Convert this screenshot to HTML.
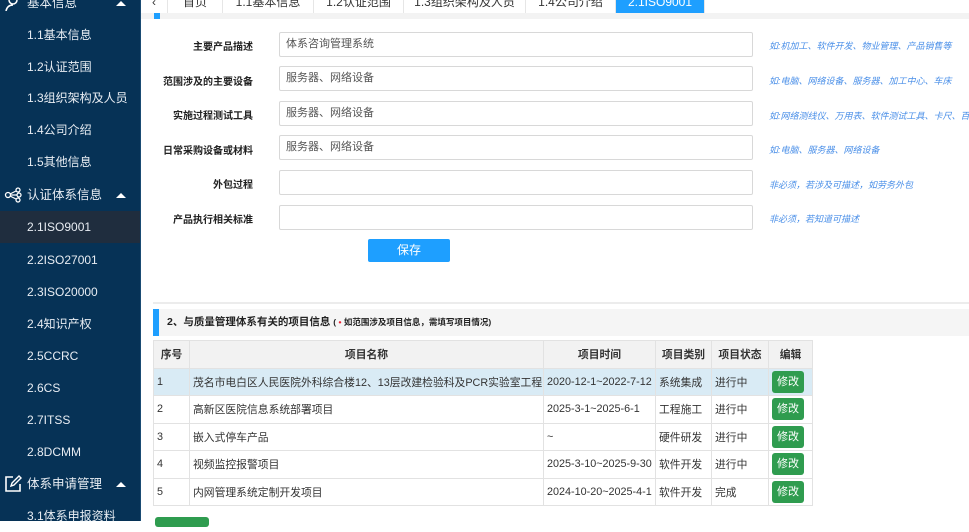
<!DOCTYPE html>
<html><head><meta charset="utf-8"><style>
*{margin:0;padding:0;box-sizing:border-box}
body{width:969px;height:521px;overflow:hidden;background:#fff;font-family:"Liberation Sans","Noto Sans CJK SC",sans-serif;font-size:12px;color:#333;position:relative}
.side{position:absolute;left:0;top:0;width:141px;height:521px;background:#063256;color:#e8edf3;border-right:1px solid #1a4b73}
.side div{position:absolute;left:0;width:140px;height:32px;line-height:32px;padding-left:27px;font-size:12px}
.side .g{padding-left:27px;font-size:12.5px}
.side .act{background:#1f2d3e}
.tri{position:absolute;right:14px;top:14px;width:0;height:0;border-left:5px solid transparent;border-right:5px solid transparent;border-bottom:5px solid #fff}
.ico{position:absolute;left:4px;top:8px}
.tabs{position:absolute;left:141px;top:0;width:828px;height:13px;background:#fff}
.tab{position:absolute;top:-8px;height:21px;line-height:21px;text-align:center;font-size:12px;color:#333;border-right:1px solid #e6e6e6}
.strip{position:absolute;left:141px;top:13px;width:828px;height:6px;background:#f3f3f3}
.lbl{position:absolute;width:120px;left:133px;text-align:right;font-weight:bold;font-size:10px;color:#222}
.inp{position:absolute;left:279px;width:474px;height:25px;border:1px solid #d8d8d8;border-radius:2px;line-height:23px;padding-left:6px;font-size:11px;color:#555}
.hint{position:absolute;left:769px;font-size:9px;color:#4a8fe8;font-style:italic;white-space:nowrap}
.save{position:absolute;left:368px;top:239px;width:82px;height:23px;background:#1e9fff;color:#fff;text-align:center;line-height:23px;border-radius:2px;font-size:12px}
table{position:absolute;left:153px;top:340px;border-collapse:collapse;font-size:10.8px;table-layout:fixed;width:659px}
td,th{border:1px solid #e2e2e2;padding:0 3px;height:27.5px;white-space:nowrap;overflow:hidden}
th{background:#f2f2f2;font-weight:bold;text-align:center;font-size:10.8px}
tr.hl td{background:#d9ebf5}
.btn{display:inline-block;width:32px;height:22px;background:#2f9c4f;color:#fff;border-radius:3px;text-align:center;line-height:22px;font-size:11px}
</style></head><body>
<div class="side">
<div style="top:-13px" class="g"><svg class="ico" width="18" height="16" viewBox="0 0 18 16"><circle cx="9" cy="5" r="4" fill="none" stroke="#fff" stroke-width="1.5"/><path d="M2 16c1-5 4-6 7-6" fill="none" stroke="#fff" stroke-width="1.5"/></svg>基本信息<span class="tri"></span></div>
<div style="top:19px">1.1基本信息</div>
<div style="top:51px">1.2认证范围</div>
<div style="top:82px">1.3组织架构及人员</div>
<div style="top:114px">1.4公司介绍</div>
<div style="top:146px">1.5其他信息</div>
<div style="top:179px" class="g"><svg class="ico" width="18" height="16" viewBox="0 0 18 16"><circle cx="4" cy="8" r="2.5" fill="none" stroke="#fff" stroke-width="1.3"/><circle cx="14" cy="3" r="2" fill="none" stroke="#fff" stroke-width="1.3"/><circle cx="15" cy="8" r="2" fill="none" stroke="#fff" stroke-width="1.3"/><circle cx="14" cy="13" r="2" fill="none" stroke="#fff" stroke-width="1.3"/><path d="M6 7l6-3M6.5 8h6.5M6 9l6 3" stroke="#fff" stroke-width="1.2"/></svg>认证体系信息<span class="tri"></span></div>
<div style="top:211px" class="act">2.1ISO9001</div>
<div style="top:244px">2.2ISO27001</div>
<div style="top:276px">2.3ISO20000</div>
<div style="top:308px">2.4知识产权</div>
<div style="top:340px">2.5CCRC</div>
<div style="top:372px">2.6CS</div>
<div style="top:404px">2.7ITSS</div>
<div style="top:436px">2.8DCMM</div>
<div style="top:468px" class="g"><svg class="ico" width="18" height="18" viewBox="0 0 18 18" style="top:7px"><path d="M9 2H2v14h14V9" fill="none" stroke="#fff" stroke-width="1.6"/><path d="M7 11l1-3 7-7 2 2-7 7z" fill="none" stroke="#fff" stroke-width="1.4"/></svg>体系申请管理<span class="tri"></span></div>
<div style="top:500px">3.1体系申报资料</div>
</div>
<div class="tabs">
<div class="tab" style="left:0;width:27px">‹</div>
<div class="tab" style="left:27px;width:55px">首页</div>
<div class="tab" style="left:82px;width:91px">1.1基本信息</div>
<div class="tab" style="left:173px;width:90px">1.2认证范围</div>
<div class="tab" style="left:263px;width:122px">1.3组织架构及人员</div>
<div class="tab" style="left:385px;width:90px">1.4公司介绍</div>
<div class="tab" style="left:475px;width:89px;background:#1e9fff;color:#fff">2.1ISO9001</div>
</div>
<div class="strip"></div>
<div style="position:absolute;left:154px;top:13px;width:6px;height:6px;background:#1e9fff"></div>

<div class="lbl" style="top:38px">主要产品描述</div><div class="inp" style="top:32px">体系咨询管理系统</div><div class="hint" style="top:39px">如:机加工、软件开发、物业管理、产品销售等</div>
<div class="lbl" style="top:73px">范围涉及的主要设备</div><div class="inp" style="top:66px">服务器、网络设备</div><div class="hint" style="top:74px">如:电脑、网络设备、服务器、加工中心、车床</div>
<div class="lbl" style="top:107px">实施过程测试工具</div><div class="inp" style="top:101px">服务器、网络设备</div><div class="hint" style="top:109px">如:网络测线仪、万用表、软件测试工具、卡尺、百分表</div>
<div class="lbl" style="top:142px">日常采购设备或材料</div><div class="inp" style="top:135px">服务器、网络设备</div><div class="hint" style="top:143px">如:电脑、服务器、网络设备</div>
<div class="lbl" style="top:176px">外包过程</div><div class="inp" style="top:170px"></div><div class="hint" style="top:178px">非必须，若涉及可描述，如劳务外包</div>
<div class="lbl" style="top:211px">产品执行相关标准</div><div class="inp" style="top:205px"></div><div class="hint" style="top:212px">非必须，若知道可描述</div>
<div class="save">保存</div>

<div style="position:absolute;left:153px;top:302px;width:816px;height:2px;background:#ececec"></div>
<div style="position:absolute;left:153px;top:309px;width:816px;height:27px;background:#f5f5f5;border-left:6px solid #1e9fff;line-height:27px;padding-left:8px;font-weight:bold;font-size:10.5px;color:#222">2、与质量管理体系有关的项目信息 <span style="font-size:8.5px">( <span style="color:#e23">•</span> 如范围涉及项目信息，需填写项目情况)</span></div>
<table>
<colgroup><col style="width:36px"><col style="width:354px"><col style="width:112px"><col style="width:56px"><col style="width:57px"><col style="width:44px"></colgroup>
<tr><th>序号</th><th>项目名称</th><th>项目时间</th><th>项目类别</th><th>项目状态</th><th>编辑</th></tr>
<tr class="hl"><td>1</td><td>茂名市电白区人民医院外科综合楼12、13层改建检验科及PCR实验室工程</td><td>2020-12-1~2022-7-12</td><td>系统集成</td><td>进行中</td><td><span class="btn">修改</span></td></tr>
<tr><td>2</td><td>高新区医院信息系统部署项目</td><td>2025-3-1~2025-6-1</td><td>工程施工</td><td>进行中</td><td><span class="btn">修改</span></td></tr>
<tr><td>3</td><td>嵌入式停车产品</td><td>~</td><td>硬件研发</td><td>进行中</td><td><span class="btn">修改</span></td></tr>
<tr><td>4</td><td>视频监控报警项目</td><td>2025-3-10~2025-9-30</td><td>软件开发</td><td>进行中</td><td><span class="btn">修改</span></td></tr>
<tr><td>5</td><td>内网管理系统定制开发项目</td><td>2024-10-20~2025-4-1</td><td>软件开发</td><td>完成</td><td><span class="btn">修改</span></td></tr>
</table>
<div style="position:absolute;left:155px;top:517px;width:54px;height:10px;background:#2f9c4f;border-radius:3px"></div>
</body></html>
